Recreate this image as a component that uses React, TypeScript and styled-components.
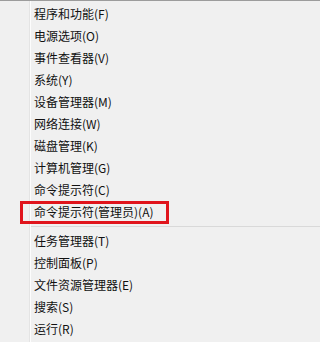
import React from "react";
import styled, { createGlobalStyle } from "styled-components";

const Global = createGlobalStyle`
  html, body {
    margin: 0;
    padding: 0;
    background: #f0f0f0;
  }
  #root {
    width: 100%;
  }
`;

const Menu = styled.main`
  width: 100%;
  min-height: 100vh;
  box-sizing: border-box;
  overflow: hidden;
  border-top: 1px solid #9c9c9c;
  padding-top: 2px;
  font-family: "Noto Sans CJK SC", "Microsoft YaHei", sans-serif;
  font-size: 12px;
  color: #111;
  background:
    linear-gradient(to right, transparent 29px, #e4e4e4 29px, #e4e4e4 30px, #fdfdfd 30px, #fdfdfd 31px, transparent 31px),
    #f0f0f0;
`;

const Item = styled.div<{ $marked?: boolean }>`
  position: relative;
  height: 22px;
  line-height: 22px;
  padding-left: 34px;
  white-space: nowrap;

  ${({ $marked }) =>
    $marked &&
    `
    &::after {
      content: "";
      position: absolute;
      left: 20px;
      top: 0;
      width: 149px;
      height: 23px;
      box-sizing: border-box;
      border: 3px solid #e0141c;
    }
  `}
`;

const Separator = styled.div`
  margin: 3px 0 3px 31px;
  height: 1px;
  background: #d9d9d9;
`;

const groups = [
  [
    "程序和功能(F)",
    "电源选项(O)",
    "事件查看器(V)",
    "系统(Y)",
    "设备管理器(M)",
    "网络连接(W)",
    "磁盘管理(K)",
    "计算机管理(G)",
    "命令提示符(C)",
    "命令提示符(管理员)(A)",
  ],
  ["任务管理器(T)", "控制面板(P)", "文件资源管理器(E)", "搜索(S)", "运行(R)"],
];

const App = () => {
  return (
    <>
      <Global />
      <Menu>
        {groups.map((group, gi) => (
          <React.Fragment key={gi}>
            {gi > 0 && <Separator />}
            {group.map((label) => (
              <Item key={label} $marked={label === "命令提示符(管理员)(A)"}>
                {label}
              </Item>
            ))}
          </React.Fragment>
        ))}
      </Menu>
    </>
  );
};

export default App;
